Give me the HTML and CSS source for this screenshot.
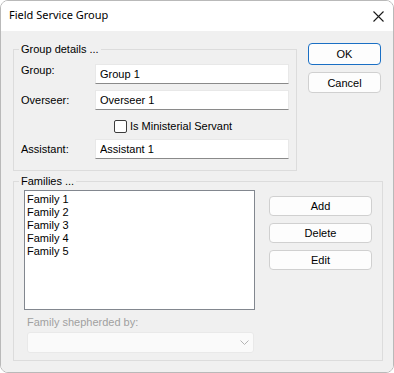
FILE: index.html
```html
<!DOCTYPE html>
<html>
<head>
	<title>Field Service Group</title>
	<link rel="stylesheet" href="styles.css">
</head>
<body>
	<div class="window">
		<div class="titlebar">
			<span class="title">Field Service Group</span>
			<svg class="close" width="11" height="11" viewBox="0 0 11 11">
				<path d="M0.5 0.5 L10.5 10.5 M10.5 0.5 L0.5 10.5" stroke="#1a1a1a" stroke-width="1.1" fill="none"/>
			</svg>
		</div>

		<div class="client">
			<div class="top-row">
				<fieldset class="group-box">
					<legend>Group details ...</legend>
					<div class="row first">
						<label for="group">Group:</label>
						<input type="text" id="group" value="Group 1">
					</div>
					<div class="row">
						<label for="overseer">Overseer:</label>
						<input type="text" id="overseer" value="Overseer 1">
					</div>
					<div class="check-row">
						<input type="checkbox" id="ministerial">
						<label for="ministerial">Is Ministerial Servant</label>
					</div>
					<div class="row assistant">
						<label for="assistant">Assistant:</label>
						<input type="text" id="assistant" value="Assistant 1">
					</div>
				</fieldset>

				<div class="dialog-buttons">
					<button class="default">OK</button>
					<button>Cancel</button>
				</div>
			</div>

			<fieldset class="families-box">
				<legend>Families ...</legend>
				<div class="families-row">
					<div class="listbox">
						<div>Family 1</div>
						<div>Family 2</div>
						<div>Family 3</div>
						<div>Family 4</div>
						<div>Family 5</div>
					</div>
					<div class="list-buttons">
						<button>Add</button>
						<button>Delete</button>
						<button>Edit</button>
					</div>
				</div>
				<div class="shepherd-label">Family shepherded by:</div>
				<div class="combo">
					<svg width="9" height="5" viewBox="0 0 9 5">
						<path d="M0.5 0.5 L4.5 4.5 L8.5 0.5" stroke="#b4b4b4" stroke-width="1" fill="none"/>
					</svg>
				</div>
			</fieldset>
		</div>
	</div>
</body>
</html>
```

FILE: styles.css
```css
body {
	margin: 0;
	background-color: #ffffff;
	font-family: 'Liberation Sans', Arial, sans-serif;
	font-size: 11px;
	color: #000;
}
.window {
	width: 394px;
	height: 373px;
	box-sizing: border-box;
	border: 1px solid #b9b9b9;
	border-radius: 8px;
	overflow: hidden;
	display: flex;
	flex-direction: column;
}
.titlebar {
	height: 30px;
	flex: none;
	background-color: #ffffff;
	display: flex;
	align-items: center;
	justify-content: space-between;
	padding: 0 9px 2px 8px;
	box-sizing: border-box;
}
.title {
	font-family: 'Noto Sans', sans-serif;
	font-size: 11px;
	line-height: 16px;
}
.close {
	margin-top: 2px;
}
.client {
	flex: 1;
	background-color: #f0f0f0;
	padding: 12px 10px 0 12px;
}
.top-row {
	display: flex;
	align-items: flex-start;
	gap: 11px;
}
fieldset {
	margin: 0;
	border: 1px solid #dcdcdc;
	min-width: 0;
}
legend {
	padding: 0 2px;
	line-height: 13px;
}
.group-box {
	width: 284px;
	height: 128px;
	box-sizing: border-box;
	padding: 0 7px;
}
.group-box legend {
	margin-left: -2px;
}
.row {
	display: flex;
	align-items: center;
	margin-top: 6px;
}
.row.first {
	margin-top: 8px;
	align-items: flex-start;
}
.row.assistant {
	margin-top: 3px;
}
.row label {
	width: 74px;
	line-height: 13px;
	flex: none;
}
.row input {
	flex: 1;
	height: 20px;
	box-sizing: border-box;
	margin: 0;
	padding: 0 4px 1px;
	border: 1px solid #e8e8e8;
	border-bottom-color: #8a8a8a;
	border-radius: 0;
	background-color: #ffffff;
	font-family: inherit;
	font-size: 11px;
	color: #000;
	outline: none;
}
.check-row {
	display: flex;
	align-items: center;
	height: 20px;
	margin-top: 6px;
	padding-left: 93px;
	gap: 3px;
}
.check-row input {
	appearance: none;
	width: 13px;
	height: 13px;
	margin: 0;
	border: 1px solid #3c3c3c;
	border-radius: 2px;
	background-color: #ffffff;
}
.dialog-buttons, .list-buttons {
	display: flex;
	flex-direction: column;
	gap: 7px;
}
button {
	margin: 0;
	padding: 0;
	height: 21px;
	border: 1px solid #d0d0d0;
	border-radius: 4px;
	background-color: #fdfdfd;
	font-family: inherit;
	font-size: 11px;
	color: #000;
}
.dialog-buttons button {
	width: 73px;
}
.dialog-buttons button.default {
	height: 22px;
	border-color: #1a6fc4;
}
.families-box {
	margin-top: 4px;
	padding: 0 10px 7px;
}
.families-box legend {
	margin-left: -5px;
}
.families-row {
	display: flex;
	align-items: flex-start;
	gap: 14px;
	margin-top: 2px;
}
.listbox {
	width: 231px;
	height: 120px;
	box-sizing: border-box;
	border: 1px solid #82878f;
	background-color: #ffffff;
	padding: 2px 2px;
	line-height: 13px;
}
.list-buttons {
	margin-top: 6px;
}
.list-buttons button {
	width: 103px;
	height: 20px;
}
.shepherd-label {
	margin-top: 6px;
	padding-left: 3px;
	line-height: 13px;
	color: #a0a0a0;
}
.combo {
	margin: 3px 0 0 3px;
	width: 227px;
	height: 21px;
	box-sizing: border-box;
	border: 1px solid #e9e9e9;
	border-radius: 3px;
	background-color: #fafafa;
	display: flex;
	align-items: center;
	justify-content: flex-end;
	padding: 0 4px 0 0;
}
```
